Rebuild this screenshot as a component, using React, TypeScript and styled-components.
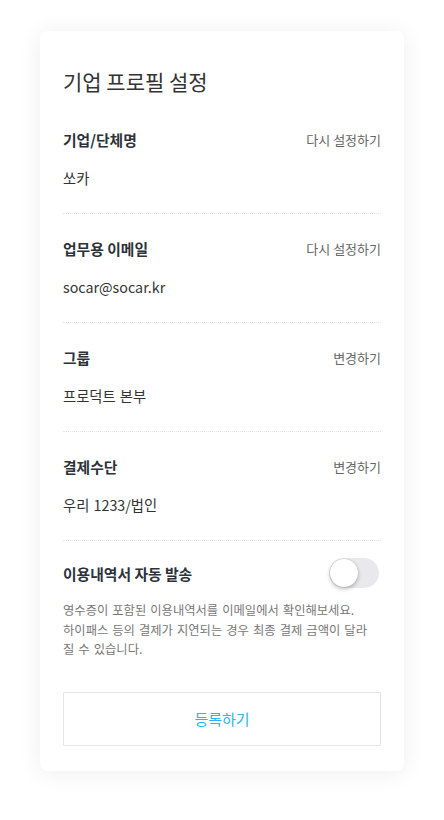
import React, { useState } from 'react'
import styled, { createGlobalStyle } from 'styled-components'

const GlobalStyle = createGlobalStyle`
  * {
    box-sizing: border-box;
  }
  body {
    margin: 0;
    background: #ffffff;
    font-family: "Noto Sans CJK KR", "Noto Sans", sans-serif;
    -webkit-font-smoothing: antialiased;
  }
`

const Page = styled.div`
  padding: 31px 40px 40px;
`

const Card = styled.div`
  background: #ffffff;
  border-radius: 8px;
  box-shadow: 0 2px 24px rgba(0, 0, 0, 0.07);
  padding: 34px 23px 25px;
`

const Title = styled.h1`
  margin: 0 0 8px;
  font-size: 21px;
  line-height: 32px;
  font-weight: 400;
  color: #333;
`

const Section = styled.div`
  padding: 23px 0 24px;
  border-bottom: 1px dotted #e4e4e4;
`

const HeaderRow = styled.div`
  display: flex;
  align-items: center;
  justify-content: space-between;
  height: 22px;
`

const Label = styled.span`
  font-size: 14.8px;
  font-weight: 700;
  color: #2d323a;
`

const Action = styled.button`
  border: none;
  background: none;
  padding: 0;
  font-family: inherit;
  font-size: 13px;
  color: #666;
  cursor: pointer;
`

const Value = styled.div`
  margin-top: 17px;
  font-size: 14.3px;
  line-height: 22px;
  word-spacing: 1px;
  color: #333;
`

const ToggleSection = styled.div`
  padding-top: 17px;
`

const ToggleRow = styled.div`
  display: flex;
  align-items: center;
  justify-content: space-between;
  height: 30px;
  padding-right: 2px;
`

const Track = styled.button<{ $on: boolean }>`
  position: relative;
  width: 50px;
  height: 30px;
  border: none;
  border-radius: 15px;
  padding: 0;
  background: ${p => (p.$on ? '#2ab4f5' : '#e9e9eb')};
  cursor: pointer;
`

const Knob = styled.span<{ $on: boolean }>`
  position: absolute;
  top: 1px;
  left: ${p => (p.$on ? '21px' : '1px')};
  width: 28px;
  height: 28px;
  border-radius: 50%;
  background: #fff;
  box-shadow: 0 2px 4px rgba(0, 0, 0, 0.25), 0 0 1px rgba(0, 0, 0, 0.2);
`

const Description = styled.p`
  margin: 13px 0 0;
  font-size: 12.3px;
  line-height: 19.5px;
  word-spacing: 1.3px;
  color: #777;
`

const SubmitButton = styled.button`
  display: block;
  width: 100%;
  height: 54px;
  margin-top: 32px;
  border: 1px solid #e6e6e6;
  border-radius: 1px;
  background: #fff;
  font-family: inherit;
  font-size: 15px;
  color: #2ab4f5;
  cursor: pointer;
`

const fields = [
  { label: '기업/단체명', action: '다시 설정하기', value: '쏘카' },
  { label: '업무용 이메일', action: '다시 설정하기', value: 'socar@socar.kr' },
  { label: '그룹', action: '변경하기', value: '프로덕트 본부' },
  { label: '결제수단', action: '변경하기', value: '우리 1233/법인' },
]

export default function App() {
  const [autoSend, setAutoSend] = useState(false)

  return (
    <>
      <GlobalStyle />
      <Page>
        <Card>
          <Title>기업 프로필 설정</Title>
          {fields.map(f => (
            <Section key={f.label}>
              <HeaderRow>
                <Label>{f.label}</Label>
                <Action>{f.action}</Action>
              </HeaderRow>
              <Value>{f.value}</Value>
            </Section>
          ))}
          <ToggleSection>
            <ToggleRow>
              <Label>이용내역서 자동 발송</Label>
              <Track $on={autoSend} onClick={() => setAutoSend(!autoSend)}>
                <Knob $on={autoSend} />
              </Track>
            </ToggleRow>
            <Description>
              영수증이 포함된 이용내역서를 이메일에서 확인해보세요.
              <br />
              하이패스 등의 결제가 지연되는 경우 최종 결제 금액이 달라
              <br />
              질 수 있습니다.
            </Description>
          </ToggleSection>
          <SubmitButton>등록하기</SubmitButton>
        </Card>
      </Page>
    </>
  )
}
